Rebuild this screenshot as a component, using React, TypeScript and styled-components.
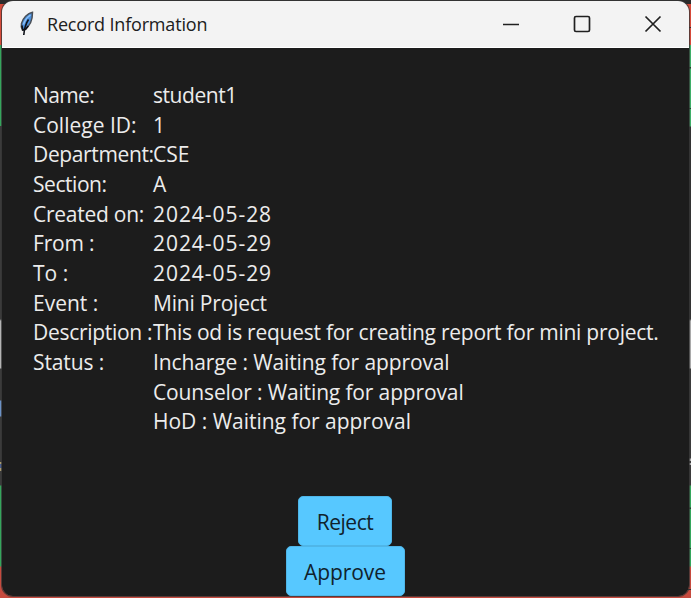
import React from "react";
import styled, { createGlobalStyle } from "styled-components";

const GlobalStyle = createGlobalStyle`
  * { box-sizing: border-box; }
  body { margin: 0; overflow: hidden; }
`;

const leftEdge = `linear-gradient(to bottom,
  #2b2b2b 0 4px, #d64a3a 4px 45px, #35a65c 45px 126px, #3b3b3b 126px 319px,
  #b4b4b4 321px 368px, #3b3b3b 369px 400px, #6c92c6 401px 416px, #3b3b3b 417px 462px,
  #a89a70 462px 464px, #4a5f90 464px 468px, #a89a70 468px 471px, #3b3b3b 471px 485px,
  #35a65c 486px 566px, #c64a3e 567px 598px)`;

const rightEdge = `linear-gradient(to bottom,
  #2b2b2b 0 4px, #d64a3a 4px 27px, #3a2b2b 27px 28px, #d64a3a 28px 45px,
  #3fae68 45px 67px, #2a3b30 67px 68px, #3fae68 69px 108px, #2a3b30 108px 109px,
  #3fae68 109px 126px, #333 127px 319px, #a9a9a9 321px 368px, #3b3b3b 369px 458px,
  #aaa 459px 461px, #3b3b3b 461px 463px, #aaa 463px 465px, #3b3b3b 465px 485px,
  #35a65c 486px 507px, #2a3b30 508px 509px, #35a65c 509px 548px, #2a3b30 548px 549px,
  #35a65c 549px 566px, #c64a3e 567px 589px, #3a2b2b 589px 590px, #c64a3e 590px 598px)`;

const Desktop = styled.div`
  width: 691px;
  height: 598px;
  padding: 0 1px 1px;
  background: ${leftEdge} left / 50% 100% no-repeat, ${rightEdge} right / 51% 100% no-repeat;
  font-family: "Open Sans", "Noto Sans", sans-serif;
`;

const Window = styled.main`
  display: flex;
  flex-direction: column;
  height: 597px;
  border: 1px solid #353535c0;
  border-radius: 12px;
  overflow: hidden;
  background: #1c1c1c;
  background-clip: padding-box;
`;

const TitleBar = styled.header`
  display: flex;
  flex: 0 0 47px;
  align-items: center;
  padding: 0 1px 0 17px;
  background: #f3f3f3;
  border-bottom: 1px solid #fff;
`;

const Title = styled.h1<{ $tracking: number }>`
  flex: 1;
  margin: 0 0 0 10px;
  color: #202020;
  font-size: 18px;
  font-weight: 400;
  line-height: 26px;
  letter-spacing: ${(p) => p.$tracking}px;
  white-space: nowrap;
`;

const Controls = styled.div`
  display: flex;
`;

const ControlButton = styled.button`
  display: grid;
  place-items: center;
  width: 71px;
  height: 46px;
  padding: 0;
  border: 0;
  background: none;
  color: #202020;
`;

const Body = styled.section`
  display: flex;
  flex: 1;
  flex-direction: column;
  align-items: center;
  justify-content: space-between;
  padding-top: 33px;
`;

const Details = styled.dl`
  display: grid;
  grid-template-columns: 120px 1fr;
  grid-auto-rows: 29.67px;
  align-self: stretch;
  margin: 0;
  padding-left: 31px;
  color: #ececec;
  font-size: 21px;
  line-height: 29.67px;
  white-space: nowrap;
`;

const Label = styled.dt<{ $tracking: number }>`
  letter-spacing: ${(p) => p.$tracking}px;
`;

const Value = styled.dd<{ $tracking: number }>`
  margin: 0;
  letter-spacing: ${(p) => p.$tracking}px;
`;

const Actions = styled.div`
  display: flex;
  flex-direction: column;
  align-items: center;
  padding-right: 1px;
`;

const ActionButton = styled.button<{ $width: number; $tracking: number }>`
  width: ${(p) => p.$width}px;
  height: 50px;
  padding: 2px 0 0;
  border: 1px solid #4fb6e8;
  border-radius: 5px;
  background: #57c8ff;
  color: #10222c;
  font: 400 21px/29px "Open Sans", "Noto Sans", sans-serif;
  letter-spacing: ${(p) => p.$tracking}px;
`;

type Field = [label: string, labelTracking: number, value: string, valueTracking: number];

const fields: Field[] = [
  ["Name:", -0.6, "student1", -0.45],
  ["College ID:", 0, "1", 0],
  ["Department:", -0.36, "CSE", 0],
  ["Section:", -0.45, "A", 0],
  ["Created on:", -0.25, "2024-05-28", 0.95],
  ["From :", -0.2, "2024-05-29", 0.95],
  ["To :", 0, "2024-05-29", 0.95],
  ["Event :", 0, "Mini Project", -0.2],
  ["Description :", -0.3, "This od is request for creating report for mini project.", -0.255],
  ["Status :", -0.1, "Incharge : Waiting for approval", -0.12],
  ["", 0, "Counselor : Waiting for approval", -0.14],
  ["", 0, "HoD : Waiting for approval", -0.02],
];

const FeatherIcon = () => (
  <svg width="18" height="26" viewBox="0 0 18 26" fill="none">
    <path
      d="M13.500 1.300C8.500 2.200 3.800 7.200 2.500 12.400c-.5 2.200-.2 4.500.9 6.600l1.600-.2C10.300 16 13.600 9.500 13.500 1.300Z"
      fill="#4a8fdc"
      stroke="#4a4f56"
      strokeWidth="1.500"
    />
    <path d="M11.500 4C8 6.500 5.500 9.500 4.500 13.500" stroke="#8dc0f5" strokeWidth="1.500" />
    <path d="M9.500 8.500C7.500 11.500 5.500 15 4.800 24" stroke="#10131a" strokeWidth="1.600" />
    <path d="M2.900 14.500 3.900 19l2.800-.8 2.500-3.200" stroke="#10131a" strokeWidth="1.600" />
  </svg>
);

const MinimizeIcon = () => (
  <svg width="18" height="18" viewBox="0 0 18 18" fill="none" stroke="currentColor" strokeWidth="1.7">
    <path d="M1 9.500h16" />
  </svg>
);

const MaximizeIcon = () => (
  <svg width="18" height="18" viewBox="0 0 18 18" fill="none" stroke="currentColor" strokeWidth="1.7">
    <rect x="1.500" y="1.500" width="15" height="15" rx="1.500" />
  </svg>
);

const CloseIcon = () => (
  <svg width="18" height="18" viewBox="0 0 18 18" fill="none" stroke="currentColor" strokeWidth="1.7">
    <path d="m1.500 1.500 15 15M16.500 1.500l-15 15" />
  </svg>
);

export default function App() {
  return (
    <>
      <GlobalStyle />
      <Desktop>
        <Window>
          <TitleBar>
            <FeatherIcon />
            <Title $tracking={-0.18}>Record Information</Title>
            <Controls>
              <ControlButton aria-label="Minimize"><MinimizeIcon /></ControlButton>
              <ControlButton aria-label="Maximize"><MaximizeIcon /></ControlButton>
              <ControlButton aria-label="Close"><CloseIcon /></ControlButton>
            </Controls>
          </TitleBar>
          <Body>
            <Details>
              {fields.map(([label, labelTracking, value, valueTracking]) => (
                <React.Fragment key={label + value}>
                  <Label $tracking={labelTracking}>{label}</Label>
                  <Value $tracking={valueTracking}>{value}</Value>
                </React.Fragment>
              ))}
            </Details>
            <Actions>
              <ActionButton $width={94} $tracking={-0.5}>Reject</ActionButton>
              <ActionButton $width={119} $tracking={-0.1}>Approve</ActionButton>
            </Actions>
          </Body>
        </Window>
      </Desktop>
    </>
  );
}
